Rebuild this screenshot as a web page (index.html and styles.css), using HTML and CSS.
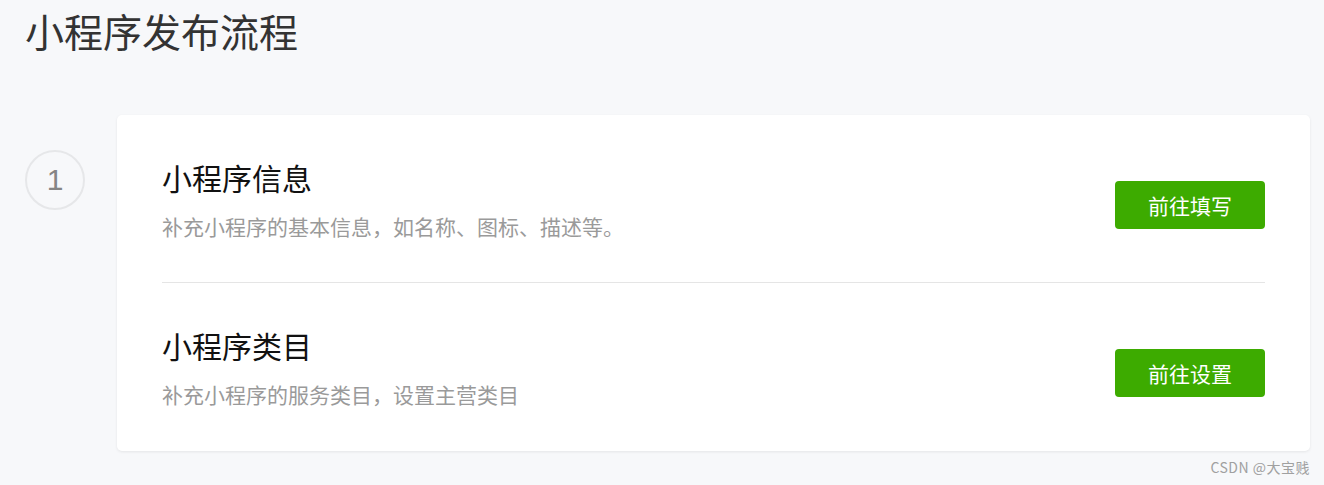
FILE: index.html
```html
<!DOCTYPE html>
<html lang="zh-CN">
<head>
<meta charset="utf-8">
<title>小程序发布流程</title>
<link rel="stylesheet" href="styles.css">
</head>
<body>
<div class="page">
  <h1 class="page-title">小程序发布流程</h1>
  <div class="step">
    <div class="step-index">1</div>
    <div class="card">
      <div class="row">
        <div class="row-text">
          <div class="row-title">小程序信息</div>
          <div class="row-desc">补充小程序的基本信息，如名称、图标、描述等。</div>
        </div>
        <a class="btn">前往填写</a>
      </div>
      <div class="row">
        <div class="row-text">
          <div class="row-title">小程序类目</div>
          <div class="row-desc">补充小程序的服务类目，设置主营类目</div>
        </div>
        <a class="btn">前往设置</a>
      </div>
    </div>
  </div>
  <div class="watermark">CSDN @大宝贱</div>
</div>
</body>
</html>
```
FILE: styles.css
```css
html, body {
  margin: 0;
  padding: 0;
}
body {
  background: #f7f8fa;
  font-family: "Noto Sans CJK SC", "Noto Sans", sans-serif;
}
.page {
  padding: 0 14px 0 25px;
}
.page-title {
  margin: 0;
  font-size: 39px;
  line-height: 60px;
  font-weight: 400;
  color: #333;
}
.step {
  display: flex;
  align-items: flex-start;
  gap: 32px;
  margin-top: 55px;
}
.step-index {
  box-sizing: border-box;
  width: 60px;
  height: 60px;
  margin-top: 35px;
  border: 2px solid #e6e7e9;
  border-radius: 50%;
  display: flex;
  align-items: center;
  justify-content: center;
  font-family: "Liberation Sans", "Noto Sans", sans-serif;
  font-size: 30px;
  color: #858585;
  flex: none;
}
.card {
  flex: 1;
  background: #fff;
  border-radius: 5px;
  box-shadow: 0 1px 3px rgba(0, 0, 0, 0.08);
  padding: 0 45px;
}
.row {
  box-sizing: border-box;
  height: 168px;
  display: flex;
  align-items: center;
  justify-content: space-between;
  border-bottom: 1px solid #e5e5e5;
}
.row:last-child {
  border-bottom: none;
}
.row-title {
  font-size: 30px;
  line-height: 40px;
  color: #111;
}
.row-desc {
  margin-top: 14px;
  font-size: 21px;
  line-height: 30px;
  color: #9a9a9a;
}
.btn {
  width: 150px;
  height: 48px;
  margin-top: 12px;
  border-radius: 4px;
  background: #3dab00;
  color: #fff;
  font-size: 21px;
  display: flex;
  align-items: center;
  justify-content: center;
}
.watermark {
  text-align: right;
  margin-top: 7px;
  font-size: 14px;
  line-height: 18px;
  letter-spacing: 0.5px;
  color: #a0a0a0;
}
```
